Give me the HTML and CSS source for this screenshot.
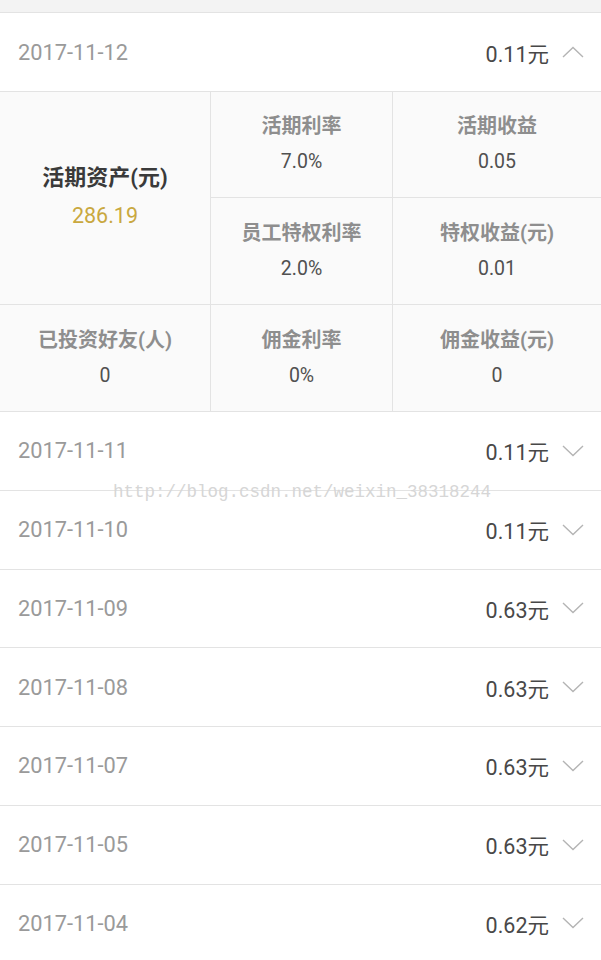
FILE: index.html
```html
<!DOCTYPE html>
<html lang="zh-CN">
<head>
    <meta charset="UTF-8">
    <meta name="viewport" content="width=device-width, initial-scale=1.0">
    <title>收益明细</title>
    <link rel="stylesheet" href="styles.css">
</head>
<body>
    <div class="list">
        <div class="day open">
            <div class="day-head">
                <span class="date">2017-11-12</span>
                <span class="amount">0.11元</span>
                <svg class="arrow" width="22" height="12" viewBox="0 0 22 12"><polyline points="1,11 11,1.5 21,11" /></svg>
            </div>
            <div class="detail">
                <div class="cell main">
                    <div class="label">活期资产(元)</div>
                    <div class="value gold">286.19</div>
                </div>
                <div class="cell">
                    <div class="label">活期利率</div>
                    <div class="value">7.0%</div>
                </div>
                <div class="cell">
                    <div class="label">活期收益</div>
                    <div class="value">0.05</div>
                </div>
                <div class="cell">
                    <div class="label">员工特权利率</div>
                    <div class="value">2.0%</div>
                </div>
                <div class="cell">
                    <div class="label">特权收益(元)</div>
                    <div class="value">0.01</div>
                </div>
                <div class="cell">
                    <div class="label">已投资好友(人)</div>
                    <div class="value">0</div>
                </div>
                <div class="cell">
                    <div class="label">佣金利率</div>
                    <div class="value">0%</div>
                </div>
                <div class="cell">
                    <div class="label">佣金收益(元)</div>
                    <div class="value">0</div>
                </div>
            </div>
        </div>
        <!-- closed days -->
        <div class="day">
            <div class="day-head">
                <span class="date">2017-11-11</span>
                <span class="amount">0.11元</span>
                <svg class="arrow" width="22" height="12" viewBox="0 0 22 12"><polyline points="1,1 11,10.5 21,1" /></svg>
            </div>
        </div>
        <div class="day">
            <div class="day-head">
                <span class="date">2017-11-10</span>
                <span class="amount">0.11元</span>
                <svg class="arrow" width="22" height="12" viewBox="0 0 22 12"><polyline points="1,1 11,10.5 21,1" /></svg>
            </div>
        </div>
        <div class="day">
            <div class="day-head">
                <span class="date">2017-11-09</span>
                <span class="amount">0.63元</span>
                <svg class="arrow" width="22" height="12" viewBox="0 0 22 12"><polyline points="1,1 11,10.5 21,1" /></svg>
            </div>
        </div>
        <div class="day">
            <div class="day-head">
                <span class="date">2017-11-08</span>
                <span class="amount">0.63元</span>
                <svg class="arrow" width="22" height="12" viewBox="0 0 22 12"><polyline points="1,1 11,10.5 21,1" /></svg>
            </div>
        </div>
        <div class="day">
            <div class="day-head">
                <span class="date">2017-11-07</span>
                <span class="amount">0.63元</span>
                <svg class="arrow" width="22" height="12" viewBox="0 0 22 12"><polyline points="1,1 11,10.5 21,1" /></svg>
            </div>
        </div>
        <div class="day">
            <div class="day-head">
                <span class="date">2017-11-05</span>
                <span class="amount">0.63元</span>
                <svg class="arrow" width="22" height="12" viewBox="0 0 22 12"><polyline points="1,1 11,10.5 21,1" /></svg>
            </div>
        </div>
        <div class="day">
            <div class="day-head">
                <span class="date">2017-11-04</span>
                <span class="amount">0.62元</span>
                <svg class="arrow" width="22" height="12" viewBox="0 0 22 12"><polyline points="1,1 11,10.5 21,1" /></svg>
            </div>
        </div>
    </div>

    <div class="watermark">http://blog.csdn.net/weixin_38318244</div>
</body>
</html>
```

FILE: styles.css
```css
body {
    margin: 0;
    padding: 12px 0 0 0;
    background-color: #f3f3f3;
    font-family: Roboto, "Noto Sans CJK SC", sans-serif;
    height: 948px;
    overflow: hidden;
    position: relative;
}
.list {
    background-color: #fff;
    border-top: 1px solid #e3e3e3;
    min-height: 960px;
}
.day {
    border-bottom: 1px solid #e3e3e3;
}
.day-head {
    display: flex;
    align-items: center;
    height: 77.75px;
    padding: 0 17px 0 18px;
}
.open .day-head {
    height: 78px;
}
.date {
    flex: 1;
    font-size: 21.8px;
    color: #9a9a9a;
}
.amount {
    font-size: 21.5px;
    color: #484848;
}
.arrow {
    margin-left: 13px;
}
.arrow polyline {
    fill: none;
    stroke: #b4b4b4;
    stroke-width: 1.4;
}
.detail {
    display: grid;
    grid-template-columns: 211px 182px 1fr;
    grid-template-rows: 106px 107px 106px;
    background-color: #fafafa;
    border-top: 1px solid #e3e3e3;
}
.cell {
    display: flex;
    flex-direction: column;
    align-items: center;
    justify-content: center;
    border-right: 1px solid #e3e3e3;
    border-bottom: 1px solid #e3e3e3;
    padding-bottom: 2px;
}
.cell:nth-child(3),
.cell:nth-child(5),
.cell:nth-child(8) {
    border-right: none;
}
.cell:nth-child(6),
.cell:nth-child(7),
.cell:nth-child(8) {
    border-bottom: none;
}
.cell.main {
    grid-row: span 2;
    padding-bottom: 4px;
}
.label {
    font-size: 20px;
    font-weight: bold;
    color: #8e8e8e;
    line-height: 28px;
}
.value {
    font-size: 19.5px;
    color: #505050;
    margin-top: 8px;
    line-height: 27px;
}
.main .label {
    color: #3a3a3a;
    font-size: 22px;
    line-height: 30px;
}
.value.gold {
    color: #c9a83f;
    font-size: 21.5px;
    margin-top: 9px;
}
.watermark {
    position: absolute;
    left: 113px;
    top: 482px;
    font-family: "Liberation Mono", monospace;
    font-size: 17.5px;
    color: #d6d6d6;
    pointer-events: none;
}
```
